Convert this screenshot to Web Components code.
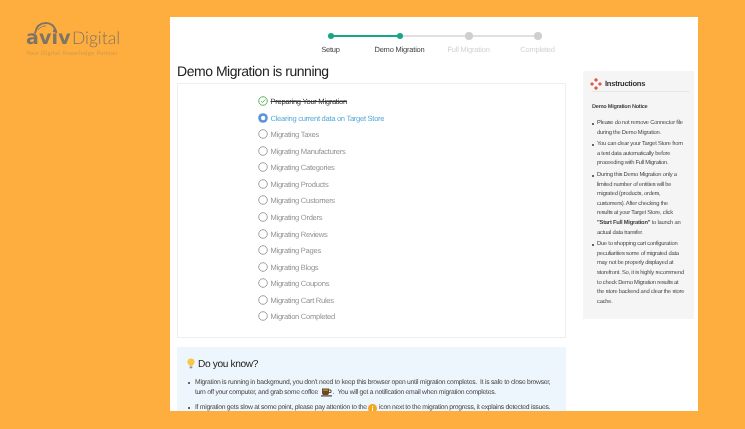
<!doctype html>
<html>
<head>
<meta charset="utf-8">
<title>Demo Migration</title>
<style>
  html, body { margin: 0; padding: 0; height: 429px; overflow: hidden; background: #fdae3e; }
  body { font-family: "Liberation Sans", Arial, sans-serif; text-rendering: geometricPrecision; }
</style>
</head>
<body>
<demo-page>
  <brand-logo slot="logo"></brand-logo>
  <step-bar></step-bar>
  <migration-list slot="main"></migration-list>
  <know-box slot="main"></know-box>
  <instruction-box slot="side"></instruction-box>
</demo-page>
<script>
class DemoPage extends HTMLElement {
  constructor() {
    super()
    this.attachShadow({ mode: "open" })
    this.shadowRoot.innerHTML = `
      <style>
        :host { display: grid; grid-template-columns: 170px 528px; height: 429px; padding-top: 17px; box-sizing: border-box; color: #333; }
        .panel { background: #fff; height: 394px; overflow: hidden; filter: blur(.35px); }
        .cols { display: grid; grid-template-columns: 389px 111px; gap: 17px; padding-left: 7px; align-items: start; }
      </style>
      <slot name="logo"></slot>
      <div class="panel">
        <slot></slot>
        <div class="cols">
          <div><slot name="main"></slot></div>
          <slot name="side"></slot>
        </div>
      </div>
    `
  }
}
customElements.define("demo-page", DemoPage)

class BrandLogo extends HTMLElement {
  constructor() {
    super()
    this.attachShadow({ mode: "open" })
    this.shadowRoot.innerHTML = `
      <style>
        :host { display: block; padding: 5px 0 0 26px; color: #7f7465; filter: blur(.4px); }
        .arc { display: block; width: 26px; height: 12px; margin: 0 0 -6px 7px; }
        .name { display: flex; align-items: baseline; gap: 1px; height: 20px; line-height: 20px; white-space: nowrap; }
        b { font-family: "DejaVu Sans", sans-serif; font-size: 19px; font-weight: 700; letter-spacing: .2px; }
        span { font-family: Lato, "Liberation Sans", sans-serif; font-size: 17.500px; font-weight: 300; }
        small { display: block; font-family: Lato, "Liberation Sans", sans-serif; font-size: 6px; line-height: 8px; margin-top: 2px; color: #d39a48; letter-spacing: .32px; white-space: nowrap; }
      </style>
      <svg class="arc" viewBox="0 0 26 12"><path d="M2 11.500C3 5 7 1 13 1S22 5 23.500 11" fill="none" stroke="#7f7465" stroke-width="1.800"/><path d="M5 8C7 5 10 4 13 4" fill="none" stroke="#7f7465" stroke-width=".8"/></svg>
      <div class="name"><b>aviv</b><span>Digital</span></div>
      <small>Your Digital Knowledge Partner</small>
    `
  }
}
customElements.define("brand-logo", BrandLogo)

class StepBar extends HTMLElement {
  constructor() {
    super()
    this.attachShadow({ mode: "open" })
    const steps = [
      { title: "Setup", done: true },
      { title: "Demo Migration", done: true },
      { title: "Full Migration" },
      { title: "Completed" },
    ]
    this.shadowRoot.innerHTML = `
      <style>
        :host { display: grid; grid-template-columns: repeat(4, 69px); margin: 15px 0 0 126px; width: 276px; height: 24px; font-size: 7.500px; letter-spacing: -.2px; }
        .step { position: relative; display: flex; flex-direction: column; align-items: center; gap: 5px; white-space: nowrap; color: #d2d2d2; }
        .step.done { color: #444; }
        .dot { width: 8px; height: 8px; border-radius: 50%; background: #cfcfcf; position: relative; z-index: 1; }
        .done .dot { width: 6px; height: 6px; margin: 1px; background: #17a689; }
        .step:not(:first-of-type)::before { content: ""; position: absolute; left: -34px; width: 69px; top: 3px; height: 2px; background: #e0e0e0; }
        .done:not(:first-of-type)::before { background: #17a689; }
        label { line-height: 10px; }
      </style>
      ${steps.map(item => `
        <div class="step ${item.done ? "done" : ""}"><i class="dot"></i><label>${item.title}</label></div>
      `).join("")}
    `
  }
}
customElements.define("step-bar", StepBar)

class MigrationList extends HTMLElement {
  constructor() {
    super()
    this.attachShadow({ mode: "open" })
    const rows = ["Migrating Taxes", "Migrating Manufacturers", "Migrating Categories", "Migrating Products", "Migrating Customers", "Migrating Orders", "Migrating Reviews", "Migrating Pages", "Migrating Blogs", "Migrating Coupons", "Migrating Cart Rules", "Migration Completed"]
    this.shadowRoot.innerHTML = `
      <style>
        :host { display: block; margin-top: 6px; }
        h1 { font-size: 14px; font-weight: 400; letter-spacing: -.47px; color: #222; margin: 0 0 3px; line-height: 18px; }
        .box { border: 1px solid #eee; box-sizing: border-box; height: 255px; padding: 9.500px 0 0 80px; }
        ul { list-style: none; margin: 0; padding: 0; }
        li { display: flex; align-items: center; gap: 2.500px; height: 16.540px; font-size: 7.600px; letter-spacing: -.3px; color: #929292; white-space: nowrap; }
        svg { width: 10px; height: 10px; flex: none; margin-bottom: 1px; }
        .ok { color: #333; text-decoration: line-through; }
        .now { color: #55a9d6; }
      </style>
      <h1>Demo Migration is running</h1>
      <div class="box">
        <ul>
          <li class="ok"><svg viewBox="0 0 10 10"><circle cx="5" cy="5" r="4.300" fill="none" stroke="#5cb85c" stroke-width="1"/><path d="M2.900 5.100 4.400 6.600 7.200 3.600" fill="none" stroke="#5cb85c" stroke-width="1"/></svg>Preparing Your Migration</li>
          <li class="now"><svg viewBox="0 0 10 10"><circle cx="5" cy="5" r="4.800" fill="#5b93dc"/><circle cx="5.200" cy="5" r="2.200" fill="#fff"/></svg>Clearing current data on Target Store</li>
          ${rows.map(item => `
            <li><svg viewBox="0 0 10 10"><circle cx="5" cy="5" r="4.300" fill="none" stroke="#a0a0a0" stroke-width="1"/></svg>${item}</li>
          `).join("")}
        </ul>
      </div>
    `
  }
}
customElements.define("migration-list", MigrationList)

class KnowBox extends HTMLElement {
  constructor() {
    super()
    this.attachShadow({ mode: "open" })
    this.shadowRoot.innerHTML = `
      <style>
        :host { display: block; margin-top: 9px; background: #eef6fd; padding: 11px 14px 20px 10px; font-size: 6.800px; letter-spacing: -.28px; color: #444; }
        h2 { display: flex; align-items: center; gap: 3px; margin: 0 0 6px; font-size: 10.200px; letter-spacing: -.37px; font-weight: 400; color: #222; line-height: 14px; }
        ul { margin: 0; padding: 0; list-style: none; display: flex; flex-direction: column; gap: 5px; }
        li { position: relative; padding-left: 8px; line-height: 10px; white-space: nowrap; }
        li::before { content: ""; position: absolute; left: 1px; top: 4px; width: 2px; height: 2px; border-radius: 50%; background: #333; }
        .cup { width: 13px; height: 10px; vertical-align: 0; margin: -3px 0; }
        .info { width: 9px; height: 9px; vertical-align: -1px; margin: -3px 0; }
        .bulb { width: 8px; height: 11px; margin-top: -3px; }
      </style>
      <h2><svg class="bulb" viewBox="0 0 8 11"><path d="M4 .500A3.500 3.500 0 0 0 2.500 7.200V8H5.500V7.200A3.500 3.500 0 0 0 4 .500Z" fill="#f7c843"/><rect x="2.700" y="8.500" width="2.600" height="1.800" fill="#8d8d8d"/></svg>Do you know?</h2>
      <ul>
        <li>Migration is running in background, you don't need to keep this browser open until migration completes.&nbsp; It is safe to close browser,<br>turn off your computer, and grab some coffee <svg class="cup" viewBox="0 0 13 10"><path d="M2 1.500H9V6C9 7.500 8 8 7 8H4C3 8 2 7.500 2 6Z" fill="#6a4a22"/><path d="M9 3H11V5.500H9" fill="none" stroke="#6a4a22"/><rect x="1" y="8.300" width="11" height="1.200" fill="#444"/><rect x="3" y="2.600" width="5" height="1" fill="#d9a54a"/></svg>.&nbsp; You will get a notification email when migration completes.</li>
        <li>If migration gets slow at some point, please pay attention to the <svg class="info" viewBox="0 0 9 9"><circle cx="4.500" cy="4.500" r="4.500" fill="#f5a623"/><rect x="4" y="3.600" width="1" height="3.400" fill="#fff"/><rect x="4" y="2" width="1" height="1" fill="#fff"/></svg> icon next to the migration progress, it explains detected issues.</li>
      </ul>
    `
  }
}
customElements.define("know-box", KnowBox)

class InstructionBox extends HTMLElement {
  constructor() {
    super()
    this.attachShadow({ mode: "open" })
    this.shadowRoot.innerHTML = `
      <style>
        :host { display: block; margin-top: 15px; height: 248px; box-sizing: border-box; background: #f5f5f5; padding: 6px 5px 0 9px; font-size: 5.800px; letter-spacing: -.23px; color: #444; }
        h3 { display: flex; align-items: center; gap: 3px; margin: 0 0 11px; padding: 0; font-size: 7.600px; letter-spacing: -.28px; font-weight: 700; color: #333; border-bottom: 1px solid #e6e6e6; line-height: 14px; }
        svg { width: 12px; height: 12px; margin-left: -2px; }
        p { margin: 0 0 8px; font-weight: 700; font-size: 5.600px; letter-spacing: -.26px; line-height: 8px; }
        ul { list-style: none; margin: 0; padding: 0; display: flex; flex-direction: column; gap: 2px; }
        li { position: relative; padding-left: 5px; line-height: 9.600px; white-space: nowrap; }
        li::before { content: ""; position: absolute; left: 0; top: 4px; width: 2px; height: 2px; border-radius: 50%; background: #333; }
      </style>
      <h3><svg viewBox="0 0 12 12"><g fill="#e0584a"><rect x="4.500" y=".500" width="3" height="3" transform="rotate(45 6 2)"/><rect x="4.500" y="8.500" width="3" height="3" transform="rotate(45 6 10)"/><rect x=".500" y="4.500" width="3" height="3" transform="rotate(45 2 6)"/><rect x="8.500" y="4.500" width="3" height="3" transform="rotate(45 10 6)"/></g></svg>Instructions</h3>
      <p>Demo Migration Notice</p>
      <ul>
        <li>Please do not remove Connector file<br>during the Demo Migration.</li>
        <li>You can clear your Target Store from<br>a test data automatically before<br>proceeding with Full Migration.</li>
        <li>During this Demo Migration only a<br>limited number of entities will be<br>migrated (products, orders,<br>customers). After checking the<br>results at your Target Store, click<br><b>"Start Full Migration"</b> to launch an<br>actual data transfer.</li>
        <li>Due to shopping cart configuration<br>peculiarities some of migrated data<br>may not be properly displayed at<br>storefront. So, it is highly recommend<br>to check Demo Migration results at<br>the store backend and clear the store<br>cache.</li>
      </ul>
    `
  }
}
customElements.define("instruction-box", InstructionBox)
</script>
</body>
</html>
